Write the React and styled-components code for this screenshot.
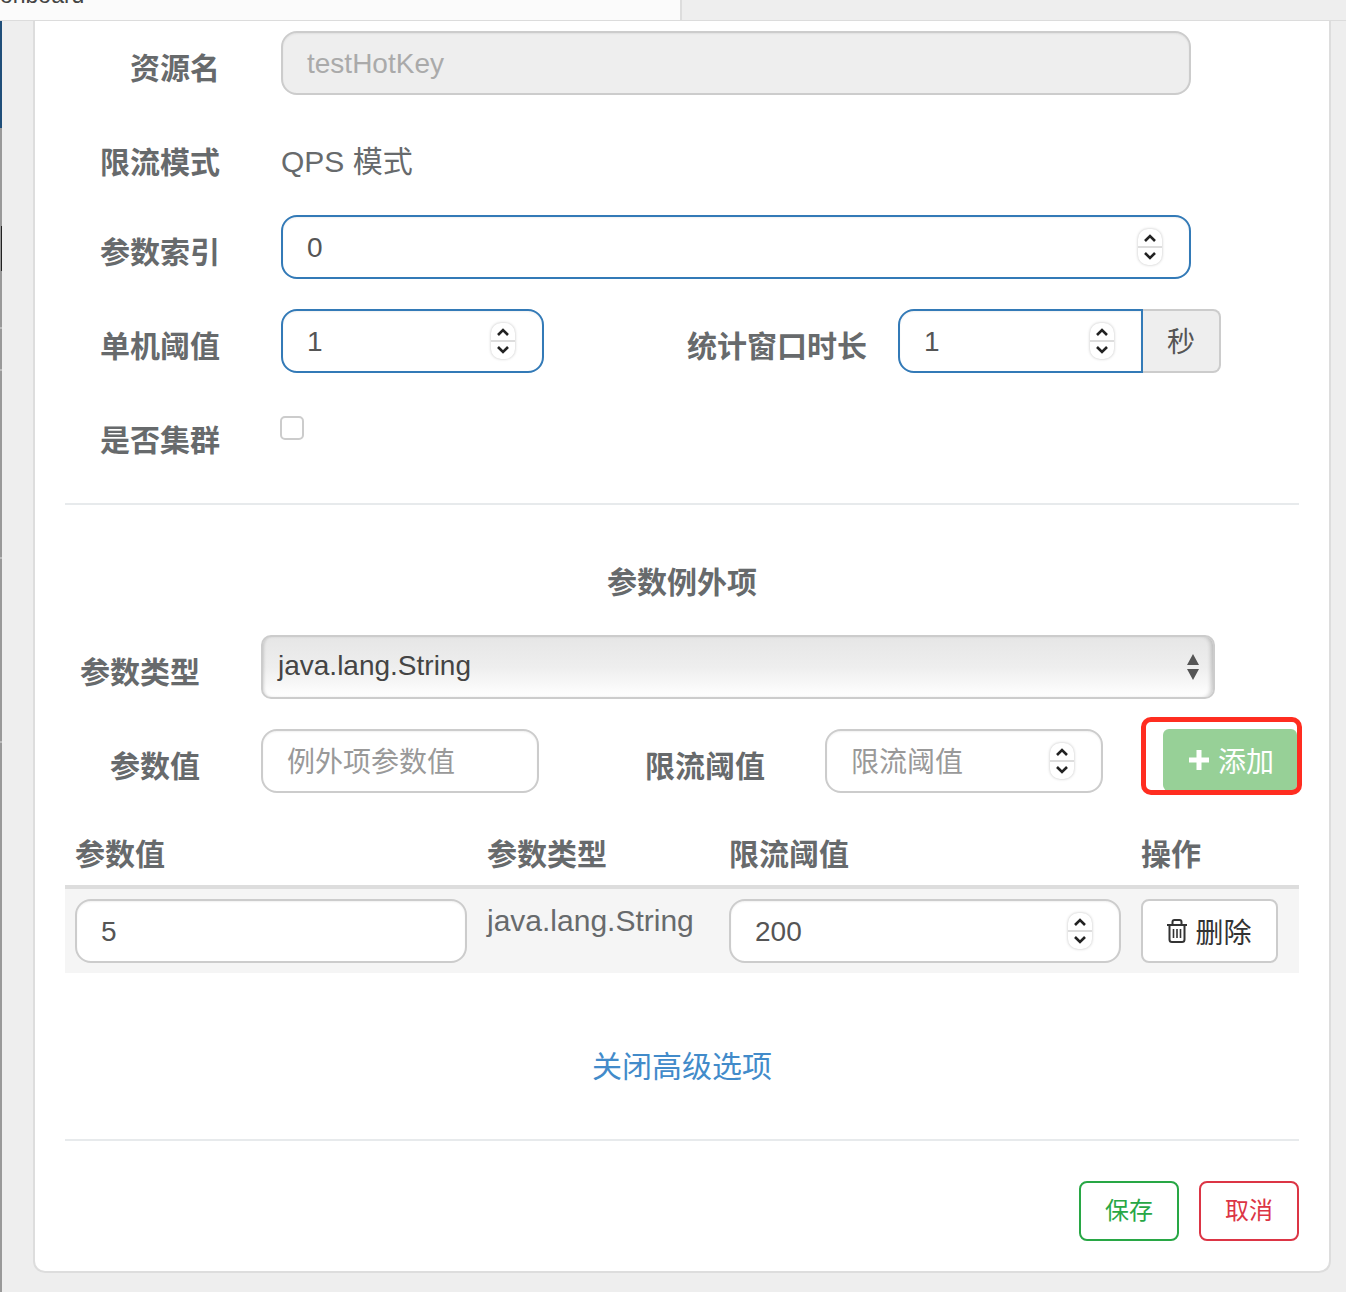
import React from 'react';
import styled, { createGlobalStyle } from 'styled-components';

const Global = createGlobalStyle`
  html, body { margin: 0; padding: 0; background: #eeeeee; }
  body { font-family: "Liberation Sans", "Noto Sans CJK SC", sans-serif; color: #676a6c; }
  * { box-sizing: border-box; }
`;

const Page = styled.div`
  width: 1346px;
  height: 1292px;
  display: flex;
  flex-direction: column;
  overflow: hidden;
  background: #eeeeee;
`;
const TopBar = styled.div`
  height: 21px;
  flex: none;
  display: flex;
  border-bottom: 1px solid #dcdcdc;
`;
const TopLeft = styled.div`
  width: 682px;
  background: #fbfbfb;
  border-right: 2px solid #dddddd;
  overflow: hidden;
  font-size: 23px;
  line-height: 20px;
  color: #444;
`;
const Clipped = styled.div`
  margin-top: -15px;
`;
const Body = styled.div`
  flex: 1;
  display: flex;
  min-height: 0;
`;
const Edge = styled.div`
  width: 2px;
  flex: none;
  height: 100%;
  background:
    linear-gradient(#222, #222) right 205px / 1px 45px no-repeat,
    linear-gradient(#bdbdbd, #bdbdbd) 0 306px / 2px 2px no-repeat,
    linear-gradient(#bdbdbd, #bdbdbd) 0 348px / 2px 2px no-repeat,
    linear-gradient(#bdbdbd, #bdbdbd) 0 536px / 2px 2px no-repeat,
    linear-gradient(#bdbdbd, #bdbdbd) 0 720px / 2px 2px no-repeat,
    linear-gradient(to bottom, #1f4e79 0, #1f4e79 107px, #999999 107px, #999999 100%);
`;
const Modal = styled.div`
  margin-left: 31px;
  width: 1298px;
  height: 1252px;
  background: #fff;
  border: 2px solid #dddddd;
  border-top: 0;
  border-radius: 0 0 12px 12px;
  padding: 10px 30px 0 30px;
  display: flex;
  flex-direction: column;
`;
const Row = styled.div`
  display: grid;
  grid-template-columns: ${p => p.$label || 155}px 1fr;
  column-gap: 61px;
  margin-top: ${p => p.$top || 0}px;
  align-items: start;
`;
const Label = styled.label`
  font-size: 30px;
  font-weight: 700;
  line-height: 42px;
  text-align: right;
  padding-top: ${p => p.$pt ?? 17}px;
  white-space: nowrap;
  color: #676a6c;
  flex: none;
`;
const WindowLabel = styled(Label)`
  width: 323px;
  margin-right: 31px;
`;
const ValueLabel = styled(Label)`
  width: 135px;
  margin-right: 61px;
`;
const LimitLabel = styled(Label)`
  width: 286px;
  padding-right: 60px;
`;
const Field = styled.div`
  width: ${p => p.$w ? p.$w + 'px' : '100%'};
  height: 64px;
  border: 2px solid ${p => p.$focus ? '#337ab7' : '#cccccc'};
  border-radius: ${p => p.$square ? '16px 0 0 16px' : '16px'};
  background: ${p => p.$disabled ? '#eeeeee' : '#fff'};
  color: ${p => p.$disabled ? '#aaaaaa' : p.$ph ? '#999999' : '#555555'};
  font-size: 28px;
  padding: ${p => p.$ph ? '0 24px 2px' : '2px 24px 0'};
  display: flex;
  align-items: center;
  justify-content: space-between;
  flex: none;
  box-shadow: inset 0 1px 2px rgba(0,0,0,.06);
`;
const Static = styled.div`
  font-size: 30px;
  line-height: 42px;
  padding-top: 10px;
  color: #676a6c;
`;
const SpinBox = styled.span`
  width: 24px;
  height: 36px;
  margin: ${p => p.$up ? '2px' : '-2px'} 3px 0 0;
  border-radius: 10px;
  background: #fff;
  box-shadow: 0 0 3px rgba(0,0,0,.25);
  display: grid;
  grid-template-rows: 1fr 1fr;
  justify-items: center;
  align-items: center;
  background-image: linear-gradient(to bottom, transparent 17px, #dddddd 17px, #dddddd 19px, transparent 19px);
`;
const Spinner = ({ up }) => (
  <SpinBox $up={up}>
    <svg width="14" height="10" viewBox="0 0 14 10"><path d="M2 8 L7 3 L12 8" fill="none" stroke="#222" strokeWidth="2.6" /></svg>
    <svg width="14" height="10" viewBox="0 0 14 10"><path d="M2 2 L7 7 L12 2" fill="none" stroke="#222" strokeWidth="2.6" /></svg>
  </SpinBox>
);
const Inline = styled.div`
  display: flex;
  align-items: flex-start;
`;
const Addon = styled.div`
  width: 78px;
  height: 64px;
  background: #eeeeee;
  border: 2px solid #cccccc;
  border-left: 0;
  border-radius: 0 8px 8px 0;
  font-size: 28px;
  line-height: 60px;
  padding-top: 2px;
  text-align: center;
  color: #555555;
`;
const Check = styled.span`
  display: block;
  width: 24px;
  height: 24px;
  margin-top: 13px;
  margin-left: -1px;
  border: 2px solid #cccccc;
  border-radius: 5px;
  background: #fff;
`;
const Rule = styled.hr`
  margin: ${p => p.$top}px 0 0;
  border: 0;
  border-top: 2px solid #e7eaec;
  width: 100%;
  flex: none;
`;
const Title = styled.h4`
  margin: 57px 0 0;
  font-size: 30px;
  line-height: 42px;
  font-weight: 700;
  text-align: center;
  color: #676a6c;
`;
const Select = styled.div`
  width: 954px;
  height: 64px;
  border: 2px solid #cccccc;
  border-radius: 10px;
  background: linear-gradient(to bottom, #e6e6e6 0%, #eeeeee 50%, #ffffff 100%);
  box-shadow: inset 3px 0 3px -2px rgba(0,0,0,.15), inset -4px 0 4px -2px rgba(0,0,0,.2);
  font-size: 28px;
  padding: 0 13px 0 15px;
  color: #444444;
  display: flex;
  justify-content: space-between;
  align-items: center;
`;
const SelectText = styled.span`
  margin-top: -2px;
`;
const AddRow = styled.div`
  display: flex;
  align-items: flex-start;
  margin-top: 30px;
`;
const AddWrap = styled.div`
  position: relative;
  margin-left: 60px;
  width: 134px;
  height: 62px;
  flex: none;
`;
const AddButton = styled.button`
  width: 100%;
  height: 100%;
  border: 0;
  border-radius: 6px;
  background: #97d097;
  color: #fff;
  font: inherit;
  font-size: 28px;
  padding: 0 0 0 2px;
  display: flex;
  align-items: center;
  justify-content: center;
  gap: 8px;
`;
const Callout = styled.div`
  position: absolute;
  left: -22px;
  top: -12px;
  width: 161px;
  height: 78px;
  border: 5px solid #ff2d20;
  border-radius: 10px;
  pointer-events: none;
`;
const TableHead = styled.div`
  display: grid;
  grid-template-columns: 412px 242px 412px 168px;
  margin-top: 34px;
  height: 62px;
  padding-top: 7px;
  border-bottom: 4px solid #dddddd;
`;
const Th = styled.div`
  font-size: 30px;
  font-weight: 700;
  line-height: 42px;
  padding: 0 10px;
  color: #676a6c;
`;
const TableRow = styled.div`
  display: grid;
  grid-template-columns: 412px 242px 412px 168px;
  height: 84px;
  background: #f5f5f5;
  padding-top: 10px;
`;
const Td = styled.div`
  padding: 0 10px;
`;
const CellText = styled.div`
  font-size: 30px;
  line-height: 42px;
  padding-top: 1px;
  color: #676a6c;
  white-space: nowrap;
`;
const DeleteButton = styled.button`
  width: 137px;
  height: 64px;
  border: 2px solid #cccccc;
  border-radius: 8px;
  background: #fff;
  color: #333333;
  font: inherit;
  font-size: 28px;
  display: flex;
  align-items: center;
  justify-content: center;
  gap: 8px;
  padding: 0;
`;
const LinkRow = styled.div`
  margin-top: 73px;
  text-align: center;
`;
const Toggle = styled.a`
  font-size: 30px;
  line-height: 42px;
  color: #428bca;
`;
const Footer = styled.div`
  margin-top: 40px;
  display: flex;
  justify-content: flex-end;
  gap: 20px;
`;
const OutlineBtn = styled.button`
  width: 100px;
  height: 60px;
  border: 2px solid ${p => p.$c};
  border-radius: 8px;
  background: #fff;
  color: ${p => p.$c};
  font: inherit;
  font-size: 24px;
  padding: 0 0 6px;
`;

const Trash = () => (
  <svg width="20" height="24" viewBox="0 0 20 24" fill="none" stroke="#333" strokeWidth="2">
    <path d="M0 6 H20" />
    <path d="M5.5 6 V3 A2 2 0 0 1 7.5 1 H12.5 A2 2 0 0 1 14.5 3 V6" />
    <path d="M2.5 6 V20.5 A2.5 2.5 0 0 0 5 23 H15 A2.5 2.5 0 0 0 17.5 20.5 V6" />
    <path d="M6.5 10 V19 M10 10 V19 M13.5 10 V19" strokeWidth="1.6" />
  </svg>
);
const Plus = () => (
  <svg width="22" height="22" viewBox="0 0 22 22"><path d="M8.5 1 H13.5 V8.5 H21 V13.5 H13.5 V21 H8.5 V13.5 H1 V8.5 H8.5 Z" fill="#fff" /></svg>
);
const Updown = () => (
  <svg width="14" height="26" viewBox="0 0 14 26"><path d="M7 0 L13 11 H1 Z M1 15 H13 L7 26 Z" fill="#555" /></svg>
);

export default function App() {
  return (
    <Page>
      <Global />
      <TopBar>
        <TopLeft><Clipped>onboard</Clipped></TopLeft>
      </TopBar>
      <Body>
        <Edge />
        <Modal>
          <Row>
            <Label>资源名</Label>
            <Field $disabled $w={910}>testHotKey</Field>
          </Row>
          <Row $top={36}>
            <Label $pt={11}>限流模式</Label>
            <Static>QPS 模式</Static>
          </Row>
          <Row $top={31}>
            <Label>参数索引</Label>
            <Field $focus $w={910}>0<Spinner /></Field>
          </Row>
          <Row $top={30}>
            <Label>单机阈值</Label>
            <Inline>
              <Field $focus $w={263}>1<Spinner /></Field>
              <WindowLabel>统计窗口时长</WindowLabel>
              <Field $focus $square $w={245}>1<Spinner /></Field>
              <Addon>秒</Addon>
            </Inline>
          </Row>
          <Row $top={30}>
            <Label>是否集群</Label>
            <Check />
          </Row>
          <Rule $top={41} />
          <Title>参数例外项</Title>
          <Row $label={135} $top={31}>
            <Label>参数类型</Label>
            <Select><SelectText>java.lang.String</SelectText><Updown /></Select>
          </Row>
          <AddRow>
            <ValueLabel>参数值</ValueLabel>
            <Field $ph $w={278}>例外项参数值</Field>
            <LimitLabel>限流阈值</LimitLabel>
            <Field $ph $w={278}>限流阈值<Spinner up /></Field>
            <AddWrap>
              <AddButton><Plus />添加</AddButton>
              <Callout />
            </AddWrap>
          </AddRow>
          <TableHead>
            <Th>参数值</Th>
            <Th>参数类型</Th>
            <Th>限流阈值</Th>
            <Th>操作</Th>
          </TableHead>
          <TableRow>
            <Td><Field>5</Field></Td>
            <Td><CellText>java.lang.String</CellText></Td>
            <Td><Field>200<Spinner /></Field></Td>
            <Td><DeleteButton><Trash />删除</DeleteButton></Td>
          </TableRow>
          <LinkRow><Toggle>关闭高级选项</Toggle></LinkRow>
          <Rule $top={51} />
          <Footer>
            <OutlineBtn $c="#28a745">保存</OutlineBtn>
            <OutlineBtn $c="#dc3545">取消</OutlineBtn>
          </Footer>
        </Modal>
      </Body>
    </Page>
  );
}
